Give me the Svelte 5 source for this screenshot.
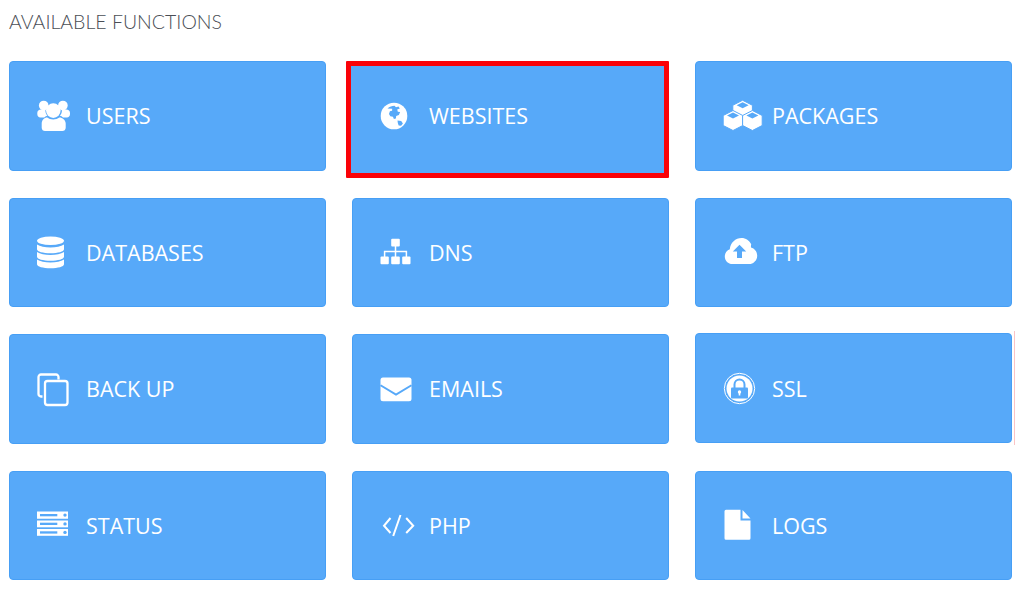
<script>
	const cube = (c, y) => {
		const w = 9.8, h = 5, d = 10;
		return `<path fill="#fff" stroke="#57a9f9" stroke-width="1" stroke-linejoin="round" d="M${c} ${y}L${c + w} ${y + h}V${y + h + d}L${c} ${y + 2 * h + d}L${c - w} ${y + h + d}V${y + h}Z"/>
			<path fill="#57a9f9" d="M${c} ${y + 2}L${c + 6} ${y + 5}L${c} ${y + 8}L${c - 6} ${y + 5}Z"/>`;
	};

	const icons = {
		users: `<circle cx="6.7" cy="9.5" r="4.8"/><circle cx="25.9" cy="9.5" r="4.8"/>
			<path d="M.3 17c0-2.2 1.6-3.6 3.6-3.6h4.6c-.4 2.4.4 4.6 2 6.2-1.2.5-2.3 1.1-3.2 2H3.4C1.6 21.6.3 20 .3 18z"/>
			<path d="M33 17c0-2.2-1.6-3.6-3.6-3.6h-4.6c.4 2.4-.4 4.6-2 6.2 1.2.5 2.3 1.1 3.2 2h3.9c1.8 0 3.1-1.6 3.1-3.6z"/>
			<circle cx="16.3" cy="14.6" r="7.3"/>
			<path d="M4.7 27.5c0-3.4 2.6-6 5.5-6 1.6 1.3 3.6 2 6 2s4.500-.7 6.200-2c2.900 0 6.300 2.600 6.300 6v4.200c0 2-1.500 3.300-3.300 3.300H8c-1.800 0-3.300-1.300-3.300-3.300z"/>`,
		globe: `<circle cx="14" cy="20" r="13.3"/>
			<path fill="#57a9f9" d="M7.500 12.500c2-1.800 4.500-2.700 7-2.700l1.500 1.400 2.500-.6 1.300 1.800-2.600 1.100.6 2.200 2.300.4-1.200 2.800-2.700 1.200-.3 2.500-2 .5-1-2.400-2.600-.4-1.300-2.400.9-2.600 2.200-.6.100-1.900z"/>
			<path fill="#57a9f9" d="M17.500 24.500l3.700.5 1.700 2.500-1.800 2.300-2.400-.4-.9-2.500z"/>`,
		packages:
			cube(19.6, 4.25) + cube(10, 14.5) + cube(29.4, 14.5),
		database: `<ellipse cx="13.500" cy="8.750" rx="13.500" ry="4.300"/>
			<path d="M0 12.500c3 2 8 3 13.500 3s10.500-1 13.500-3v4.700c0 2.400-6 4-13.500 4S0 19.600 0 17.200z"/>
			<path d="M0 20c3 2 8 3 13.500 3s10.500-1 13.500-3v4.700c0 2.400-6 4-13.500 4S0 27.100 0 24.700z"/>
			<path d="M0 27.500c3 2 8 3 13.500 3s10.500-1 13.500-3v4.700c0 2.400-6 4-13.500 4S0 34.600 0 32.200z"/>`,
		dns: `<rect x="11.200" y="6.750" width="8.600" height="7.800" rx="1"/>
			<rect x=".5" y="24.500" width="8.300" height="7.800" rx="1"/>
			<rect x="11.200" y="24.500" width="8.600" height="7.800" rx="1"/>
			<rect x="22.200" y="24.500" width="8.300" height="7.800" rx="1"/>
			<path fill="none" stroke="#fff" stroke-width="1.500" d="M15.500 14v11M4.600 25v-5.500h21.800V25"/>`,
		ftp: `<path d="M9.500 32C5.200 32 1.800 28.600 1.800 24.400c0-3.300 2.100-6.100 5-7.200C7.300 10.800 12.600 6 18.500 6c4.300 0 8 2.500 9.700 6.300-.3 1.300-.3 2.400-.2 3.300 3.500.9 6.200 4.200 6.200 8.100 0 4.600-3.700 8.300-8.300 8.300z"/>
			<path fill="#57a9f9" d="M16.500 12.750L23.200 19.500H19V26H14V19.500H9.800z"/>`,
		backup: `<rect x="8" y="12" width="22.500" height="24" rx="2.500" fill="none" stroke="#fff" stroke-width="2.300"/>
			<path fill="none" stroke="#fff" stroke-width="2.300" d="M5.500 27.500H4A2.500 2.500 0 0 1 1.500 25V8A2.500 2.500 0 0 1 4 5.500h15A2.500 2.500 0 0 1 21.500 8v2.500"/>`,
		emails: `<rect x=".5" y="8.500" width="31" height="23.750" rx="2.500"/>
			<path fill="none" stroke="#57a9f9" stroke-width="2" d="M.5 16.250L16 25.500 31.500 16.250"/>`,
		ssl: `<circle cx="16.500" cy="20.500" r="15.200" fill="none" stroke="#fff" stroke-width="1"/>
			<circle cx="16.500" cy="20.500" r="13"/>
			<path fill="none" stroke="#57a9f9" stroke-width="2" d="M11.500 20v-3.500a5 5 0 0 1 10 0V20"/>
			<rect x="8" y="19.500" width="17" height="11" rx="1" fill="#57a9f9"/>
			<circle cx="16.500" cy="24" r="1.700"/><rect x="15.700" y="24" width="1.600" height="3.500"/>`,
		status: `<rect y="6.500" width="31" height="7.250" />
			<rect y="15.500" width="31" height="6.800"/>
			<rect y="24" width="31" height="6.800"/>
			<g fill="#57a9f9">
				<rect x="3" y="9" width="17.300" height="2.300"/><circle cx="28" cy="10.100" r="1.700"/>
				<rect x="3" y="17.700" width="17.300" height="2.300"/><circle cx="28" cy="18.900" r="1.700"/>
				<rect x="3" y="26.300" width="17.300" height="2.300"/><circle cx="28" cy="27.400" r="1.700"/>
			</g>`,
		php: `<path fill="none" stroke="#fff" stroke-width="2" d="M10.500 13L4 20.750 10.500 28M20.500 10L13.200 31M26.200 13L33.200 20.750 26.200 28"/>`,
		logs: `<path d="M3 4.750H17.500V15.500H27.500V33.250A1.500 1.500 0 0 1 26 34.750H3A1.500 1.500 0 0 1 1.500 33.250V6.250A1.500 1.500 0 0 1 3 4.750Z"/>
			<path d="M19.500 5L27.500 13.500H19.500Z"/>`
	};

	const functions = [
		{ name: 'USERS', icon: 'users' },
		{ name: 'WEBSITES', icon: 'globe', marked: true },
		{ name: 'PACKAGES', icon: 'packages' },
		{ name: 'DATABASES', icon: 'database' },
		{ name: 'DNS', icon: 'dns' },
		{ name: 'FTP', icon: 'ftp' },
		{ name: 'BACK UP', icon: 'backup' },
		{ name: 'EMAILS', icon: 'emails' },
		{ name: 'SSL', icon: 'ssl', raised: true },
		{ name: 'STATUS', icon: 'status' },
		{ name: 'PHP', icon: 'php' },
		{ name: 'LOGS', icon: 'logs' }
	];
</script>

<div class="page">
	<h2>AVAILABLE FUNCTIONS</h2>
	<div class="grid">
		{#each functions as fn}
			<a class="card" class:marked={fn.marked} class:raised={fn.raised} href="#{fn.icon}">
				<svg class="icon" viewBox="0 0 40 40" width="40" height="40" fill="#fff">
					{@html icons[fn.icon]}
				</svg>
				<span>{fn.name}</span>
			</a>
		{/each}
	</div>
</div>

<style>
	:global(body) {
		background: #fff;
	}

	.page {
		height: 591px;
		box-sizing: border-box;
		padding-left: 9px;
		overflow: hidden;
	}

	h2 {
		margin: 0;
		height: 61px;
		box-sizing: border-box;
		padding-top: 11px;
		font-family: Lato, sans-serif;
		font-weight: 300;
		font-size: 19.5px;
		line-height: 22px;
		color: #4a4e55;
	}

	.grid {
		display: grid;
		grid-template-columns: repeat(3, 317px);
		grid-auto-rows: 109.5px;
		column-gap: 26px;
		row-gap: 27px;
	}

	.card {
		display: flex;
		align-items: center;
		gap: 9px;
		padding-left: 27px;
		box-sizing: border-box;
		background: #57a9f9;
		border: 1px solid #479ff5;
		border-radius: 4px;
		color: #fff;
		text-decoration: none;
		font-family: 'Open Sans', sans-serif;
		font-size: 21.5px;
		position: relative;
		z-index: 0;
	}

	.icon {
		flex: none;
	}

	.card.marked::after {
		content: '';
		position: absolute;
		top: -1px;
		left: -7px;
		right: -1px;
		bottom: -8px;
		z-index: -1;
		background: #57a9f9;
		border: 5px solid #fa0208;
		border-radius: 1px;
	}

	.card.raised {
		margin-top: -1px;
		margin-bottom: 1px;
	}

	.card.raised span {
		margin-top: 2px;
	}

	.card.raised::after {
		content: '';
		position: absolute;
		top: -3px;
		right: -4px;
		bottom: -3px;
		width: 1px;
		background: #fbc4c6;
	}
</style>
